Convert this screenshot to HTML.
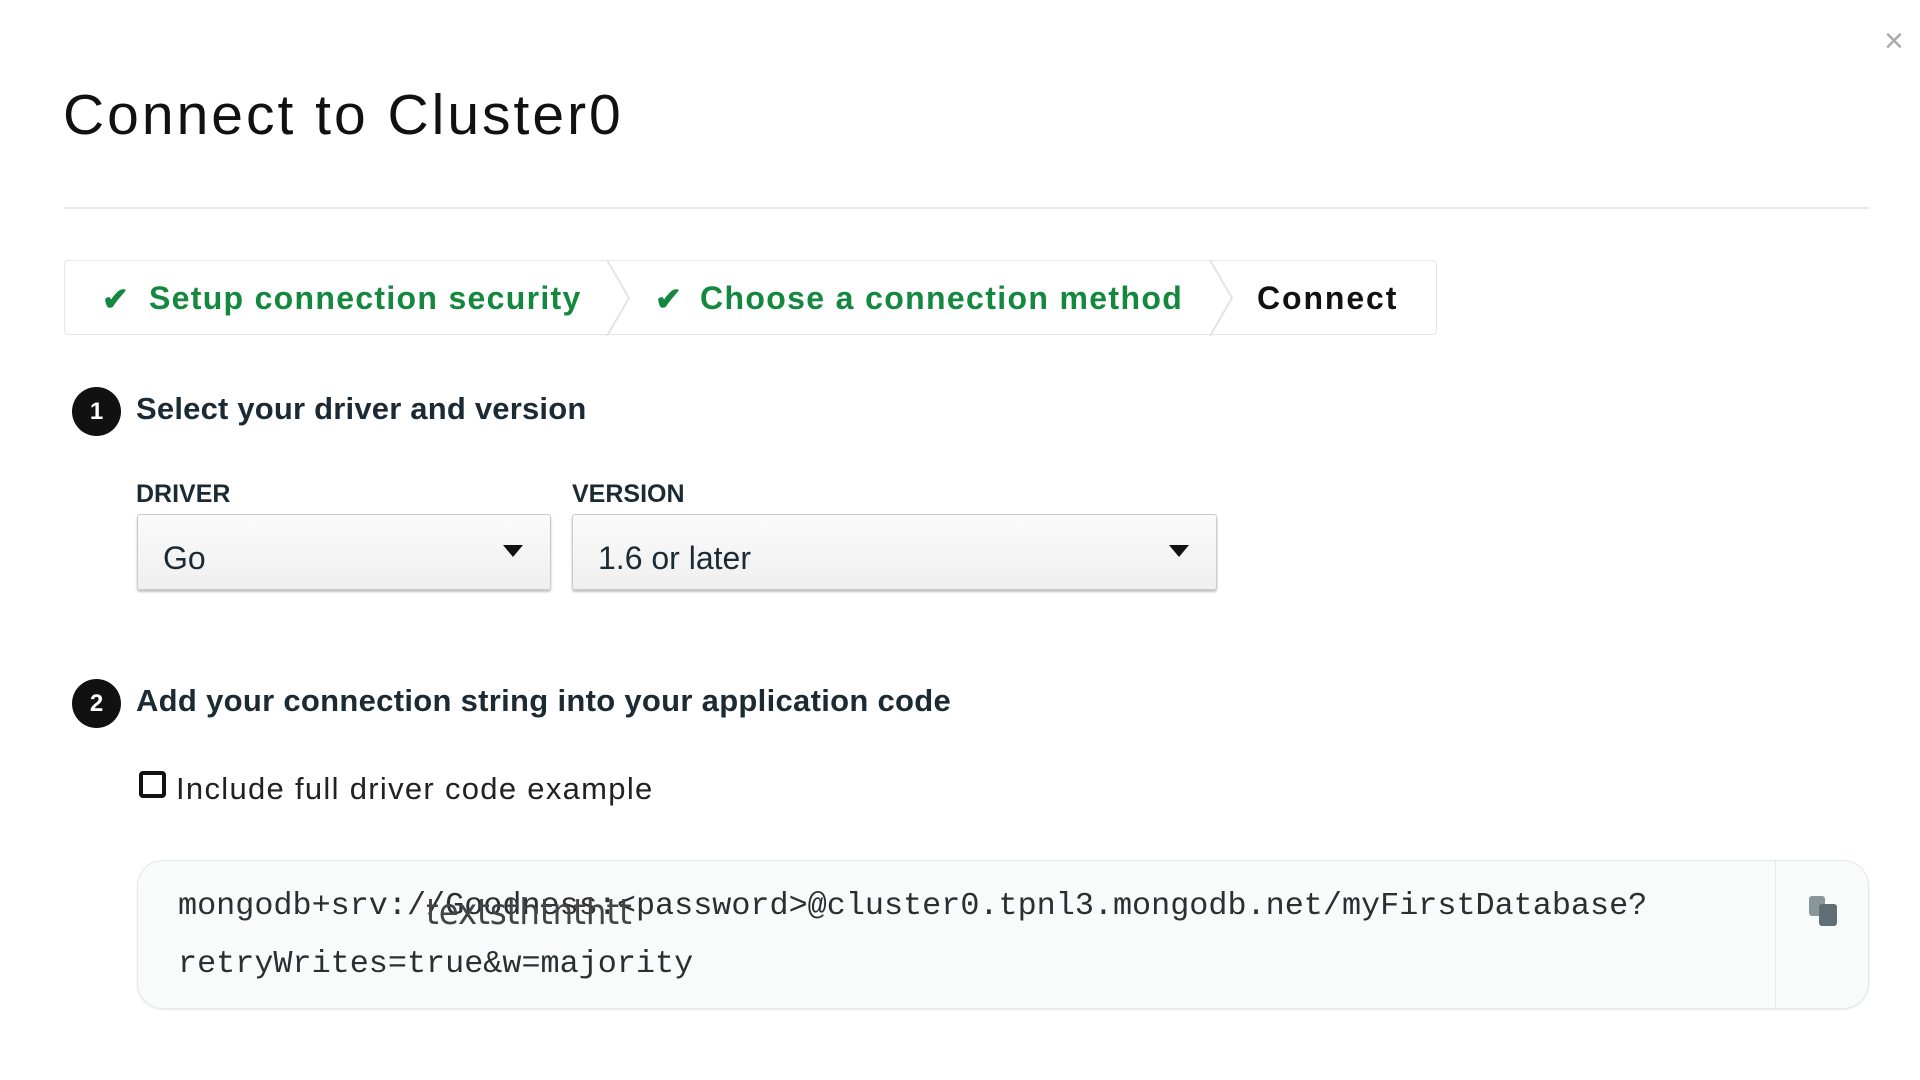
<!DOCTYPE html>
<html><head><meta charset="utf-8"><style>
body{margin:0;width:1920px;height:1080px;background:#fff;font-family:"Liberation Sans",sans-serif;color:#1c2a33;position:relative;overflow:hidden}
.a{position:absolute;white-space:nowrap}
.crumb{position:absolute;left:64px;top:260px;width:1373px;height:75px;border:1px solid #e4e8e7;border-radius:4px;box-sizing:border-box}
.g{color:#13883e;font-weight:bold;font-size:32px}
.circ{position:absolute;width:49px;height:49px;border-radius:50%;background:#111;color:#fff;font-weight:bold;font-size:24px;text-align:center;line-height:49px}
.h{font-weight:bold;font-size:31px}
.lbl{font-weight:bold;font-size:25px}
.sel{position:absolute;top:514px;height:76px;border:1px solid #c8cccc;border-radius:3px;box-sizing:border-box;background:linear-gradient(#fbfbfb,#efefef);box-shadow:0 2px 2px rgba(0,0,0,.25);font-size:32px;line-height:86px;padding-left:25px}
.tri{position:absolute;top:30px;width:0;height:0;border-left:10px solid transparent;border-right:10px solid transparent;border-top:12px solid #111}
.code{position:absolute;left:137px;top:860px;width:1732px;height:149px;border:1px solid #e4eae8;border-radius:26px;background:#f9fbfa;box-sizing:border-box;box-shadow:0 1px 2px rgba(0,0,0,.08)}
.mono{font-family:"Liberation Mono",monospace;font-size:31.8px;color:#2a2f32}
</style></head><body>
<div class="a" style="left:1884px;top:22px;font-size:34px;color:#aaa">×</div>
<div class="a" style="left:63px;top:82px;font-size:57px;color:#111;letter-spacing:3px">Connect to Cluster0</div>
<div class="a" style="left:64px;top:207px;width:1805px;height:2px;background:#e6e9e9"></div>
<div class="crumb"></div>
<svg class="a" style="left:605px;top:260px" width="30" height="76"><path d="M2 0 L24 38 L2 76" fill="none" stroke="#e1e5e4" stroke-width="2"/></svg>
<svg class="a" style="left:1208px;top:260px" width="30" height="76"><path d="M2 0 L24 38 L2 76" fill="none" stroke="#e1e5e4" stroke-width="2"/></svg>
<div class="a g" style="left:102px;top:280px">✔</div>
<div class="a g" style="left:149px;top:280px;letter-spacing:1.3px">Setup connection security</div>
<div class="a g" style="left:655px;top:280px">✔</div>
<div class="a g" style="left:700px;top:280px;letter-spacing:1.35px">Choose a connection method</div>
<div class="a" style="left:1257px;top:280px;font-weight:bold;font-size:32px;color:#111;letter-spacing:1.9px">Connect</div>
<div class="circ" style="left:72px;top:387px">1</div>
<div class="a h" style="left:136px;top:391px;letter-spacing:0.2px">Select your driver and version</div>
<div class="a lbl" style="left:136px;top:480px">DRIVER</div>
<div class="a lbl" style="left:572px;top:480px">VERSION</div>
<div class="sel" style="left:137px;width:414px">Go<div class="tri" style="left:365px"></div></div>
<div class="sel" style="left:572px;width:645px">1.6 or later<div class="tri" style="left:596px"></div></div>
<div class="circ" style="left:72px;top:679px">2</div>
<div class="a h" style="left:136px;top:683px;letter-spacing:0.3px">Add your connection string into your application code</div>
<div class="a" style="left:139px;top:771px;width:19px;height:19px;border:4px solid #111;border-radius:4px"></div>
<div class="a" style="left:176px;top:771px;font-size:31px;color:#222;letter-spacing:1.3px">Include full driver code example</div>
<div class="code"></div>
<div class="a" style="left:1775px;top:861px;width:1px;height:147px;background:#e4eae8"></div>
<svg class="a" style="left:1806px;top:892px" width="34" height="36" viewBox="0 0 34 36"><rect x="3" y="4" width="16" height="20" rx="3" fill="#89979b"/><rect x="13" y="12" width="18" height="22" rx="3" fill="#5f6f75"/></svg>
<div class="a mono" style="left:178px;top:888px">mongodb+srv://Goodness:&lt;password&gt;@cluster0.tpnl3.mongodb.net/myFirstDatabase?</div>
<div class="a" style="left:426px;top:892px;font-size:36px;color:#444;font-family:'DejaVu Sans Condensed','Liberation Sans',sans-serif">textsthtnthtt</div>
<div class="a mono" style="left:178px;top:946px">retryWrites=true&amp;w=majority</div>
</body></html>
